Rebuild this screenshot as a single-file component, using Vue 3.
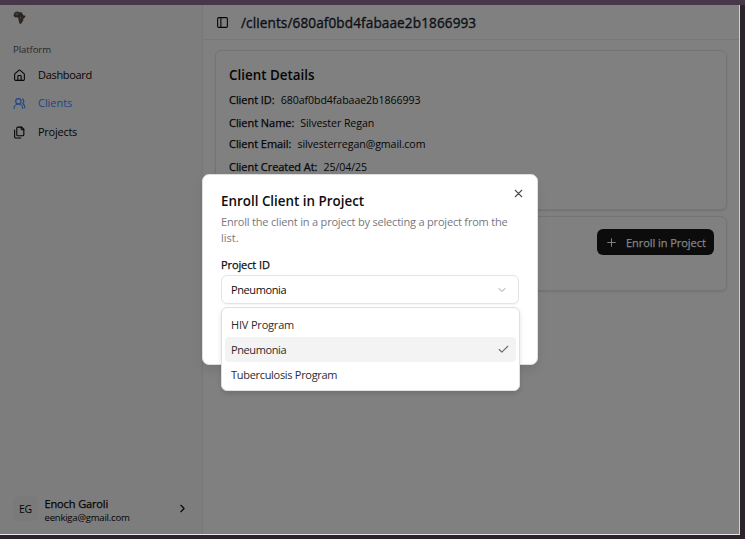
<script setup>
const nav = [
  { label: 'Dashboard', icon: 'home', cls: 'dash' },
  { label: 'Clients', icon: 'users', cls: 'clients active' },
  { label: 'Projects', icon: 'files', cls: 'projects' },
]
const details = [
  { label: 'Client ID:', value: '680af0bd4fabaae2b1866993', cls: 'd-id' },
  { label: 'Client Name:', value: 'Silvester Regan', cls: 'd-name' },
  { label: 'Client Email:', value: 'silvesterregan@gmail.com', cls: 'd-email' },
  { label: 'Client Created At:', value: '25/04/25', cls: 'd-created' },
]
const options = [
  { label: 'HIV Program', cls: 'hiv' },
  { label: 'Pneumonia', cls: 'selected' },
  { label: 'Tuberculosis Program', cls: 'tb' },
]
</script>

<template>
  <div class="screen">
    <div class="window">
      <aside class="sidebar">
        <svg class="logo" viewBox="0 0 13 14">
          <path d="M2.2 1.1 4.8.4 6.2 1.3 9 1.5 10.2 4.3 12.5 4.8 12 6.3 10.2 8 10.3 9.6 9.3 10.8 8.3 12.5 6.8 13 6.1 11 5.5 8.8 5.6 7.4 4.4 6.2 2.4 6.4.6 4.9.7 3.2Z" fill="#2a2521" />
          <path d="M2 2.2 4.5 1.5 6 3.5 3.4 4.5ZM6.6 5.4 8.7 6 8 8.8 6.8 7.5Z" fill="#443c36" />
        </svg>
        <p class="group">Platform</p>
        <nav>
          <a v-for="n in nav" :key="n.label" class="item" :class="n.cls">
            <svg class="icon" viewBox="0 0 24 24">
              <g v-if="n.icon === 'home'">
                <path d="M15 21v-8a1 1 0 0 0-1-1h-4a1 1 0 0 0-1 1v8" />
                <path d="M3 10a2 2 0 0 1 .709-1.528l7-5.999a2 2 0 0 1 2.582 0l7 5.999A2 2 0 0 1 21 10v9a2 2 0 0 1-2 2H5a2 2 0 0 1-2-2z" />
              </g>
              <g v-else-if="n.icon === 'users'">
                <path d="M18 21a8 8 0 0 0-16 0" />
                <circle cx="10" cy="8" r="5" />
                <path d="M22 20c0-3.37-2-6.5-4-8a5 5 0 0 0-.45-8.3" />
              </g>
              <g v-else>
                <path d="M20 7h-3a2 2 0 0 1-2-2V2" />
                <path d="M9 18a2 2 0 0 1-2-2V4a2 2 0 0 1 2-2h7l4 4v10a2 2 0 0 1-2 2Z" />
                <path d="M3 7.6v12.8A1.6 1.6 0 0 0 4.6 22h9.8" />
              </g>
            </svg>
            <span>{{ n.label }}</span>
          </a>
        </nav>
        <div class="user">
          <div class="avatar">EG</div>
          <div class="who">
            <div><span class="uname">Enoch Garoli</span></div>
            <div><span class="mail">eenkiga@gmail.com</span></div>
          </div>
          <svg class="icon" viewBox="0 0 24 24"><path d="m9 18 6-6-6-6" /></svg>
        </div>
      </aside>

      <main class="main">
        <header class="header">
          <svg class="icon" viewBox="0 0 24 24"><rect x="3" y="3" width="18" height="18" rx="2" /><path d="M9 3v18" /></svg>
          <h1>/clients/680af0bd4fabaae2b1866993</h1>
        </header>
        <section class="card info">
          <h2>Client Details</h2>
          <div v-for="d in details" :key="d.label" class="row" :class="d.cls">
            <span class="key">{{ d.label }}</span>
            <span class="val">{{ d.value }}</span>
          </div>
        </section>
        <section class="card enroll">
          <button class="add">
            <svg class="icon" viewBox="0 0 24 24"><path d="M5 12h14M12 5v14" /></svg>
            <span>Enroll in Project</span>
          </button>
        </section>
      </main>
    </div>

    <div class="dialog">
      <svg class="close" viewBox="0 0 24 24"><path d="M18 6 6 18M6 6l12 12" /></svg>
      <h2><span class="title">Enroll Client in Project</span></h2>
      <p class="desc"><span class="line1">Enroll the client in a project by selecting a project from the</span><br /><span class="line2">list.</span></p>
      <div class="label"><span class="labeltext">Project ID</span></div>
      <div class="select">
        <span class="picked">Pneumonia</span>
        <svg class="chev" viewBox="0 0 24 24"><path d="m6 9 6 6 6-6" /></svg>
      </div>
    </div>

    <div class="menu">
      <div v-for="o in options" :key="o.label" class="option" :class="o.cls">
        <span>{{ o.label }}</span>
        <svg v-if="o.cls === 'selected'" class="check" viewBox="0 0 24 24"><path d="M20 6 9 17l-5-5" /></svg>
      </div>
    </div>
  </div>
</template>

<style>
body { margin: 0; overflow: hidden; }
</style>

<style scoped>
* { box-sizing: border-box; }
h1, h2, p { margin: 0; }
span { white-space: nowrap; }
.screen {
  position: relative;
  width: 745px;
  height: 539px;
  padding-top: 5px;
  background: linear-gradient(#483649 0 5px, #2b222c 5px);
  font-family: "Open Sans", "Noto Sans", sans-serif;
  font-size: 11px;
  color: #050505;
}
.window {
  display: flex;
  width: 740px;
  height: 530px;
  background: #808080;
  border-right: 1px solid #d0d0d0;
  border-bottom: 1px solid #e8e8e8;
}
.icon {
  width: 13px;
  height: 13px;
  flex: none;
  fill: none;
  stroke: currentColor;
  stroke-width: 2;
  stroke-linecap: round;
  stroke-linejoin: round;
}
.sidebar {
  display: flex;
  flex-direction: column;
  width: 203px;
  padding: 6px 13px 13px;
  background: #7d7d7d;
  border-right: 1px solid #777;
}
.logo { display: block; width: 13px; height: 14px; }
.group {
  margin-top: 17px;
  height: 16px;
  line-height: 16px;
  font-size: 9.6px;
  color: #282829;
  letter-spacing: -0.1px;
}
nav { margin-top: 3px; display: flex; flex-direction: column; }
.item { display: flex; align-items: center; gap: 12px; height: 28px; }
.item span { line-height: 16px; }
.dash { letter-spacing: -0.32px; }
.clients { letter-spacing: -0.05px; }
.projects { height: 30px; letter-spacing: -0.25px; }
.active { color: #1e4489; }
.user { display: flex; align-items: center; margin-top: auto; height: 26px; }
.avatar {
  width: 25px;
  height: 25px;
  border-radius: 6px;
  background: #7a7a7a;
  text-align: center;
  line-height: 26px;
  font-size: 10.5px;
  letter-spacing: -0.2px;
}
.who { flex: 1; padding: 1px 0 0 6.5px; }
.who div { height: 13px; line-height: 15px; }
.uname { font-size: 11px; letter-spacing: -0.12px; -webkit-text-stroke: 0.25px; }
.mail { font-size: 9.6px; letter-spacing: -0.25px; }
.main { flex: 1; }
.header {
  display: flex;
  align-items: center;
  gap: 12px;
  height: 35px;
  padding-left: 13px;
  border-bottom: 1px solid #787878;
}
h1 {
  font-size: 13.6px;
  font-weight: 400;
  line-height: 22px;
  padding-top: 1px;
  letter-spacing: 0.1px;
  color: #0d1016;
  -webkit-text-stroke: 0.35px;
}
.card {
  width: 512px;
  margin-left: 12px;
  border: 1px solid #747474;
  border-radius: 6px;
  box-shadow: 0 1px 2px rgba(0, 0, 0, 0.12);
}
.info { height: 160px; margin-top: 10px; padding: 15px 13px; }
.info h2 { height: 23px; line-height: 18px; font-size: 13.4px; font-weight: 600; letter-spacing: 0; }
.row { display: flex; gap: 6px; height: 23px; line-height: 22px; }
.d-name { height: 21px; }
.key { letter-spacing: -0.05px; -webkit-text-stroke: 0.25px; }
.val { font-size: 10.6px; letter-spacing: -0.06px; }
.enroll { height: 75px; margin-top: 6px; padding: 12px; display: flex; justify-content: flex-end; align-items: flex-start; }
.add {
  display: flex;
  align-items: center;
  gap: 8px;
  width: 117px;
  height: 26px;
  padding: 0 8px;
  border: 0;
  border-radius: 6px;
  background: #0c0c0d;
  color: #858585;
  font: 400 11px "Open Sans", sans-serif;
  letter-spacing: -0.05px;
}
.add span { -webkit-text-stroke: 0.25px; }
.add .icon { stroke-width: 1.8; }
.dialog {
  position: absolute;
  left: 202px;
  top: 174px;
  width: 336px;
  height: 191px;
  padding: 18px 18px 0;
  background: #fff;
  border: 1px solid #dedede;
  border-radius: 7px;
  box-shadow: 0 6px 10px rgba(0, 0, 0, 0.08);
  color: #0d0d10;
}
.close {
  position: absolute;
  right: 12px;
  top: 12px;
  width: 13px;
  height: 13px;
  fill: none;
  stroke: #4c4c4f;
  stroke-width: 2;
  stroke-linecap: round;
}
.dialog h2 { height: 20px; font-size: 13.4px; line-height: 17px; font-weight: 600; }
.title { letter-spacing: 0; }
.desc { line-height: 16px; color: #77777f; height: 43px; margin-top: 1px; }
.line1 { letter-spacing: -0.19px; }
.label { height: 18px; line-height: 16px; }
.labeltext { letter-spacing: -0.1px; -webkit-text-stroke: 0.25px; }
.select {
  display: flex;
  align-items: center;
  justify-content: space-between;
  width: 298px;
  height: 29px;
  padding: 0 10px 0 9px;
  border: 1px solid #e4e4e7;
  border-radius: 6px;
  box-shadow: 0 1px 1px rgba(0, 0, 0, 0.04);
}
.picked { letter-spacing: -0.4px; }
.chev { width: 12px; height: 12px; fill: none; stroke: #a0a0a3; stroke-width: 2; stroke-linecap: round; stroke-linejoin: round; }
.menu {
  position: absolute;
  left: 221px;
  top: 307px;
  width: 299px;
  height: 84px;
  padding: 4px 3px;
  background: #fff;
  border: 1px solid #e0e0e2;
  border-radius: 6px;
  box-shadow: 0 3px 5px rgba(0, 0, 0, 0.12);
  color: #2c2c2f;
}
.option {
  display: flex;
  align-items: center;
  justify-content: space-between;
  height: 25.2px;
  padding: 0 6px;
  border-radius: 4px;
  letter-spacing: -0.3px;
}
.option.hiv { padding-bottom: 1px; letter-spacing: -0.18px; }
.option.selected { background: #f3f3f3; letter-spacing: -0.4px; }
.check { width: 13px; height: 13px; fill: none; stroke: #6b6b70; stroke-width: 2; stroke-linecap: round; stroke-linejoin: round; }
</style>
